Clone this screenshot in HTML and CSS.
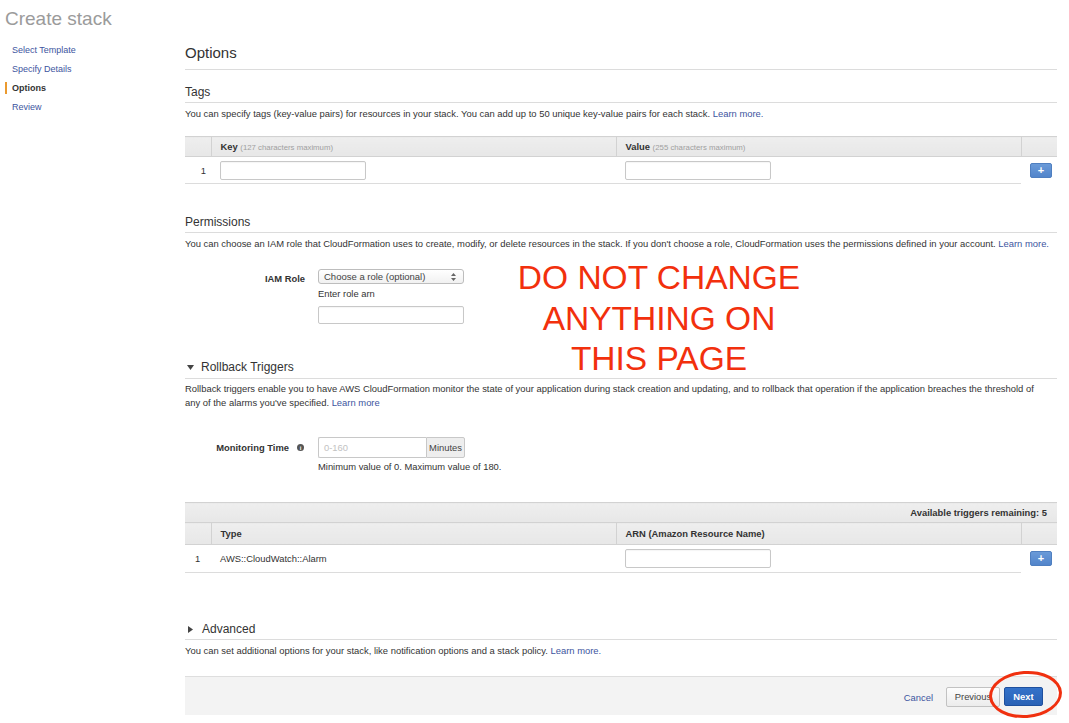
FILE: index.html
```html
<!DOCTYPE html>
<html lang="en">
<head>
<meta charset="utf-8">
<title>Create stack</title>
<link rel="stylesheet" href="styles.css">
</head>
<body>
<div class="page">
  <h1 class="page-title">Create stack</h1>
  <div class="layout">
    <nav class="steps">
      <a class="step">Select Template</a>
      <a class="step">Specify Details</a>
      <a class="step active">Options</a>
      <a class="step">Review</a>
    </nav>
    <main class="content">
      <h2 class="page-heading">Options</h2>

      <section class="section sec-tags">
        <h3 class="section-title">Tags</h3>
        <p class="desc">You can specify tags (key-value pairs) for resources in your stack. You can add up to 50 unique key-value pairs for each stack. <a class="link">Learn more.</a></p>
        <table class="grid grid-tags">
          <colgroup><col class="c-num"><col class="c-main"><col class="c-main"><col class="c-act"></colgroup>
          <thead>
            <tr class="head-row"><th></th><th>Key <span class="hint">(127 characters maximum)</span></th><th>Value <span class="hint">(255 characters maximum)</span></th><th></th></tr>
          </thead>
          <tbody>
            <tr class="body-row"><td class="num num-right">1</td><td><span class="text-input key-input"></span></td><td><span class="text-input key-input"></span></td><td class="act"><span class="add-btn">+</span></td></tr>
          </tbody>
        </table>
      </section>

      <section class="section sec-perm">
        <h3 class="section-title">Permissions</h3>
        <p class="desc">You can choose an IAM role that CloudFormation uses to create, modify, or delete resources in the stack. If you don't choose a role, CloudFormation uses the permissions defined in your account. <a class="link">Learn more.</a></p>
        <div class="form-row iam-row">
          <div class="form-label">IAM Role</div>
          <div class="form-control">
            <div class="select">
              <span>Choose a role (optional)</span>
              <svg class="select-arrows" width="5" height="8" viewBox="0 0 5 8"><path d="M2.5 0 L5 3 L0 3 Z M2.5 8 L5 5 L0 5 Z" fill="#666"/></svg>
            </div>
            <div class="helper">Enter role arn</div>
            <span class="text-input arn-input"></span>
          </div>
        </div>
      </section>

      <section class="section sec-rollback">
        <h3 class="section-title"><svg class="caret" width="7" height="5" viewBox="0 0 7 5"><path d="M0 0 L7 0 L3.5 5 Z" fill="#444"/></svg>Rollback Triggers</h3>
        <p class="desc desc-tight">Rollback triggers enable you to have AWS CloudFormation monitor the state of your application during stack creation and updating, and to rollback that operation if the application breaches the threshold of any of the alarms you've specified. <a class="link">Learn more</a></p>
        <div class="form-row mon-row">
          <div class="form-label">Monitoring Time <span class="info">i</span></div>
          <div class="form-control">
            <div class="input-group">
              <span class="group-input">0-160</span><span class="group-addon">Minutes</span>
            </div>
            <div class="helper helper-min">Minimum value of 0. Maximum value of 180.</div>
          </div>
        </div>
        <table class="grid grid-triggers">
          <colgroup><col class="c-num"><col class="c-main"><col class="c-main"><col class="c-act"></colgroup>
          <thead>
            <tr class="meta-row"><th colspan="4" class="meta">Available triggers remaining: 5</th></tr>
            <tr class="head-row head-row2"><th></th><th>Type</th><th>ARN (Amazon Resource Name)</th><th></th></tr>
          </thead>
          <tbody>
            <tr class="body-row body-row2"><td class="num num-left">1</td><td>AWS::CloudWatch::Alarm</td><td><span class="text-input key-input"></span></td><td class="act"><span class="add-btn">+</span></td></tr>
          </tbody>
        </table>
      </section>

      <section class="section sec-adv">
        <h3 class="section-title"><svg class="caret caret-right" width="5" height="7" viewBox="0 0 5 7"><path d="M0 0 L5 3.5 L0 7 Z" fill="#444"/></svg>Advanced</h3>
        <p class="desc">You can set additional options for your stack, like notification options and a stack policy. <a class="link">Learn more.</a></p>
      </section>

      <div class="footer">
        <a class="link cancel">Cancel</a>
        <span class="btn btn-prev">Previous</span>
        <span class="btn btn-next">Next</span>
      </div>
    </main>
  </div>

  <div class="warning">DO NOT CHANGE<br>ANYTHING ON<br>THIS PAGE</div>
  <div class="ring"></div>
</div>
</body>
</html>
```

FILE: styles.css
```css
* { box-sizing: border-box; }

body {
  margin: 0;
  font-family: "Liberation Sans", Arial, Helvetica, sans-serif;
  color: #333;
  background: #fff;
}

.page {
  position: relative;
  width: 1069px;
  height: 723px;
  overflow: hidden;
}

.page-title {
  margin: 0;
  height: 30px;
  padding: 8px 0 0 5px;
  font-size: 19px;
  line-height: 22px;
  font-weight: normal;
  color: #9b9b9b;
}

.layout {
  display: flex;
}

.steps {
  width: 185px;
  flex: none;
  padding-top: 10px;
  display: flex;
  flex-direction: column;
}

.step {
  display: flex;
  align-items: center;
  height: 19px;
  padding-left: 12px;
  font-size: 9px;
  color: #3d55a0;
}

.step.active {
  padding-left: 5px;
  color: #333;
  font-weight: bold;
}

.step.active::before {
  content: "";
  width: 2px;
  height: 12px;
  margin-right: 5px;
  background: #eb9a2f;
}

.content {
  width: 872px;
  flex: none;
  padding-top: 14px;
}

.page-heading {
  margin: 0;
  font-size: 15px;
  line-height: 18px;
  font-weight: normal;
  padding-bottom: 7px;
  border-bottom: 1px solid #dcdcdc;
}

.section-title {
  margin: 0;
  display: flex;
  align-items: center;
  font-size: 12px;
  line-height: 15px;
  font-weight: normal;
  padding-bottom: 2px;
  border-bottom: 1px solid #dcdcdc;
}

.caret {
  margin: 0 7px 0 2px;
}

.caret-right {
  margin: 0 9px 0 3px;
}

.sec-tags { margin-top: 15px; }
.sec-perm { margin-top: 31px; }
.sec-rollback { margin-top: 36px; }
.sec-adv { margin-top: 49px; }

.sec-rollback .section-title { padding-bottom: 3px; }

.desc {
  margin: 4px 0 0;
  font-size: 9.42px;
  line-height: 14px;
}

.desc-tight {
  margin-top: 3px;
  padding-right: 12px;
}

.link {
  color: #3d55a0;
}

.grid {
  width: 872px;
  border-collapse: collapse;
  table-layout: fixed;
  font-size: 9.4px;
}

.c-num { width: 26px; }
.c-main { width: 405px; }
.c-act { width: 36px; }

.grid-tags { margin-top: 15px; }
.grid-triggers { margin-top: 28px; }

.grid th {
  height: 20px;
  padding: 0 9px;
  text-align: left;
  font-weight: bold;
  background: linear-gradient(#eeeeee, #e7e7e7);
  border-top: 1px solid #d2d2d2;
  border-bottom: 1px solid #d2d2d2;
}

.grid th + th {
  border-left: 1px solid #d2d2d2;
}

.head-row2 th { height: 22px; }

.grid th.meta {
  height: 20px;
  text-align: right;
  padding-right: 10px;
}

.hint {
  font-weight: normal;
  font-size: 7.8px;
  color: #a0a0a0;
}

.grid td {
  height: 27px;
  padding: 0 9px;
  border-bottom: 1px solid #dcdcdc;
  vertical-align: middle;
}

.body-row2 td { height: 28px; }

.grid td.num-right {
  text-align: right;
  padding-right: 5px;
}

.grid td.num-left {
  padding-left: 10px;
}

.grid td.act {
  padding: 0 5px 0 9px;
  border-bottom-color: #fff;
}

.text-input {
  display: block;
  border: 1px solid #c8c8c8;
  border-radius: 2px;
  background: #fff;
  box-shadow: inset 0 1px 1px rgba(0,0,0,0.04);
}

.key-input {
  width: 146px;
  height: 19px;
}

.add-btn {
  display: flex;
  align-items: center;
  justify-content: center;
  width: 22px;
  height: 15px;
  border-radius: 2px;
  background: linear-gradient(#6a9ad8, #5285cb);
  border: 1px solid #4f7fc0;
  color: #fff;
  font-size: 11px;
  font-weight: bold;
  line-height: 1;
}

.form-row {
  display: grid;
  grid-template-columns: 120px 146px;
  column-gap: 13px;
  font-size: 9.4px;
}

.form-label {
  text-align: right;
  font-weight: bold;
  display: flex;
  justify-content: flex-end;
  align-items: center;
}

.iam-row { margin-top: 18px; }
.iam-row .form-label { height: 16px; padding-top: 2px; }

.mon-row { margin-top: 27px; }
.mon-row .form-label { height: 21px; padding-right: 1px; }

.info {
  display: inline-flex;
  align-items: center;
  justify-content: center;
  width: 7px;
  height: 7px;
  margin-left: 8px;
  border-radius: 50%;
  background: #555;
  color: #fff;
  font-size: 6px;
  font-weight: bold;
}

.select {
  display: flex;
  align-items: center;
  justify-content: space-between;
  width: 146px;
  height: 15px;
  padding: 0 7px 0 5px;
  border: 1px solid #bdbdbd;
  border-radius: 3px;
  background: linear-gradient(#ffffff, #f1f1f1);
  font-size: 9.5px;
  color: #444;
}

.helper {
  margin-top: 3px;
  line-height: 14px;
  font-size: 9.4px;
}

.arn-input {
  margin-top: 5px;
  width: 146px;
  height: 18px;
}

.input-group {
  display: flex;
  width: 147px;
  height: 21px;
}

.group-input {
  width: 108px;
  display: flex;
  align-items: center;
  padding-left: 5px;
  border: 1px solid #c8c8c8;
  border-right: none;
  border-radius: 2px 0 0 2px;
  color: #c2c2c2;
  font-size: 9.4px;
}

.group-addon {
  width: 39px;
  display: flex;
  align-items: center;
  justify-content: center;
  border: 1px solid #c8c8c8;
  border-radius: 0 2px 2px 0;
  background: #eeeeee;
  color: #444;
}

.helper-min {
  margin-top: 2px;
  white-space: nowrap;
}

.footer {
  margin-top: 18px;
  height: 39px;
  display: flex;
  align-items: center;
  justify-content: flex-end;
  padding-right: 14px;
  background: #f3f3f3;
  border-top: 1px solid #dedede;
  font-size: 9.4px;
}

.cancel {
  margin-right: 13px;
  margin-top: 2px;
}

.btn {
  display: flex;
  align-items: center;
  justify-content: center;
  height: 20px;
  border-radius: 2px;
  margin-top: 1px;
}

.btn-prev {
  width: 54px;
  margin-right: 4px;
  border: 1px solid #c2c2c2;
  background: linear-gradient(#fdfdfd, #ececec);
  color: #444;
}

.btn-next {
  width: 39px;
  height: 19px;
  border: 1px solid #1f509e;
  background: linear-gradient(#3472c9, #2a62b6);
  color: #fff;
  font-weight: bold;
}

.warning {
  position: absolute;
  left: 459px;
  top: 258px;
  width: 400px;
  text-align: center;
  font-size: 33.5px;
  line-height: 40.5px;
  color: #f2300d;
}

.ring {
  position: absolute;
  left: 989px;
  top: 671px;
  width: 73px;
  height: 47px;
  border: 3px solid #f0300f;
  border-radius: 50%;
  transform: rotate(-4deg);
}
```
